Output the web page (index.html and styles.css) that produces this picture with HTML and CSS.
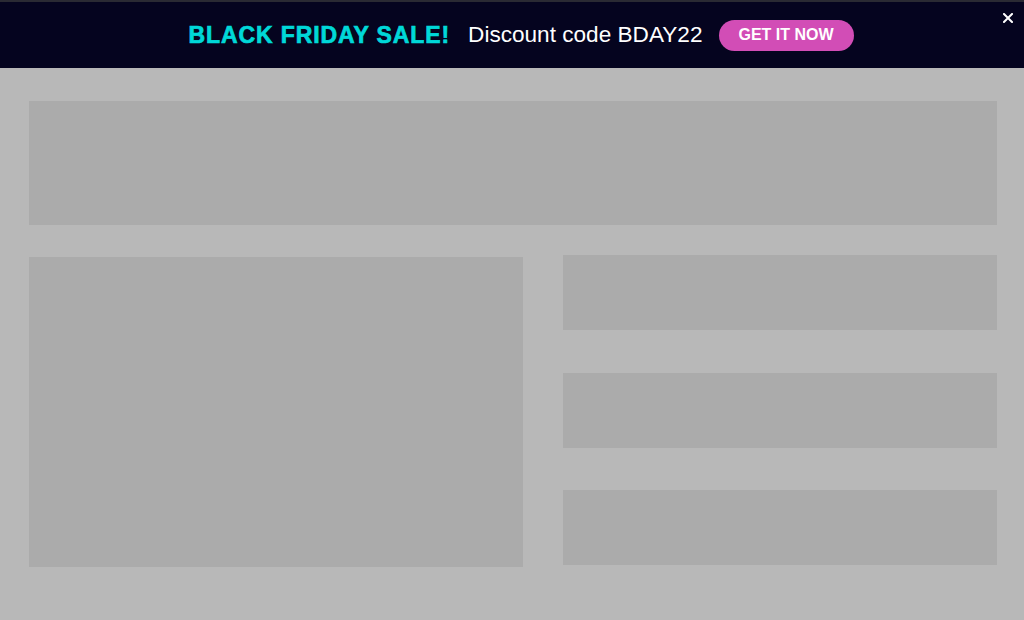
FILE: index.html
```html
<!DOCTYPE html>
<html lang="en">
<head>
<meta charset="utf-8">
<title>Black Friday</title>
<link rel="stylesheet" href="styles.css">
</head>
<body>
<div class="banner">
  <span class="sale">BLACK FRIDAY SALE!</span>
  <span class="code">Discount code BDAY22</span>
  <a class="cta" href="#">GET IT NOW</a>
  <button class="close" aria-label="Close">
    <svg width="10" height="10" viewBox="0 0 10 10"><path d="M1 1L9 9M9 1L1 9" stroke="#fff" stroke-width="2" stroke-linecap="square"/></svg>
  </button>
</div>
<main class="content">
  <div class="block hero"></div>
  <div class="row">
    <div class="block main-card"></div>
    <div class="side">
      <div class="block side-card"></div>
      <div class="block side-card"></div>
      <div class="block side-card"></div>
    </div>
  </div>
</main>
</body>
</html>
```

FILE: styles.css
```css
* { box-sizing: border-box; }
html, body { margin: 0; padding: 0; }
body {
  background: #b8b8b8;
  font-family: "Liberation Sans", Arial, sans-serif;
  height: 620px;
  overflow: hidden;
}
.banner {
  position: relative;
  height: 68px;
  background: #05041f;
  border-top: 2px solid #2a2a33;
  display: flex;
  align-items: center;
  justify-content: center;
  padding-left: 18px;
}
.sale {
  color: #00d8d8;
  font-weight: bold;
  font-size: 23px;
  letter-spacing: 0.9px;
  -webkit-text-stroke: 0.7px #00d8d8;
  margin-right: 18px;
}
.code {
  color: #ffffff;
  font-size: 22.6px;
  margin-right: 16px;
}
.cta {
  display: inline-flex;
  align-items: center;
  justify-content: center;
  width: 135px;
  height: 31px;
  border-radius: 16px;
  background: #d24db6;
  color: #fff;
  font-weight: bold;
  font-size: 16px;
  text-decoration: none;
}
.close {
  position: absolute;
  right: 11px;
  top: 11px;
  background: none;
  border: 0;
  padding: 0;
  width: 10px;
  height: 10px;
  display: flex;
  cursor: pointer;
}
.content {
  padding: 33px 27px 0 29px;
}
.block { background: #ababab; }
.hero { height: 124px; }
.row {
  display: flex;
  gap: 40px;
  margin-top: 30px;
}
.main-card {
  width: 494px;
  height: 310px;
  margin-top: 2px;
}
.side {
  flex: 1;
  height: 310px;
  display: flex;
  flex-direction: column;
  justify-content: space-between;
}
.side-card { height: 75px; }
```
